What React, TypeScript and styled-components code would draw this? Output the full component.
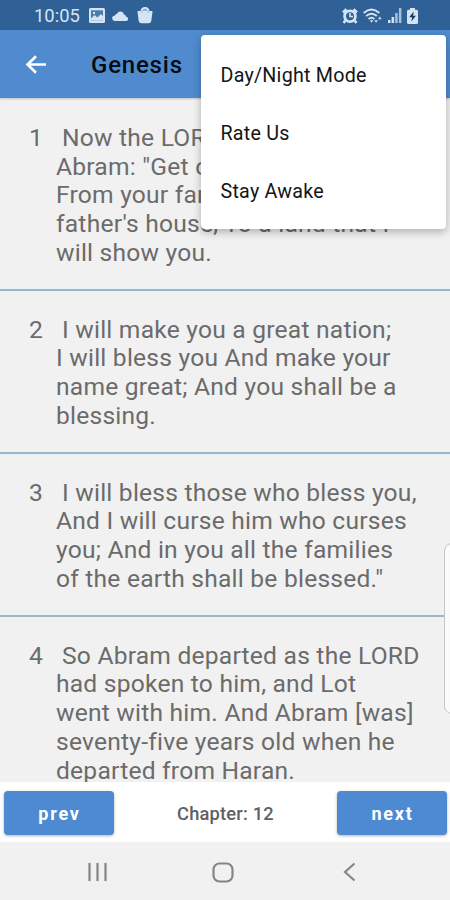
import React from "react";
import styled, { createGlobalStyle } from "styled-components";

const Global = createGlobalStyle`
  * { box-sizing: border-box; }
  body { margin: 0; background: #f1f1f1; font-family: Roboto, sans-serif; }
`;

const Screen = styled.div`
  position: relative;
  width: 450px;
  height: 900px;
  display: flex;
  flex-direction: column;
  overflow: hidden;
  background: #f1f1f1;
`;

const StatusBar = styled.header`
  height: 30px;
  flex: none;
  display: flex;
  align-items: center;
  justify-content: space-between;
  padding: 1px 32px 0 34px;
  background: #306196;
  color: #d3e4f4;
`;

const StatusGroup = styled.div<{ $gap: number }>`
  display: flex;
  align-items: center;
  gap: ${(p) => p.$gap}px;
  svg { display: block; }
`;

const Clock = styled.span`
  width: 47px;
  font-size: 18.4px;
  line-height: 28px;
  white-space: nowrap;
`;

const AppBar = styled.div`
  height: 68px;
  flex: none;
  display: flex;
  align-items: center;
  padding: 1px 0 0 25px;
  background: #508bcf;
  box-shadow: 0 1px 2px rgba(0, 0, 0, 0.2);
  z-index: 1;
`;

const Title = styled.h1`
  margin: 0 0 0 44px;
  font-size: 24px;
  font-weight: 500;
  letter-spacing: 0.8px;
  color: #050b14;
`;

const IconButton = styled.button`
  border: 0;
  padding: 0;
  background: none;
  display: flex;
`;

const Verses = styled.main`
  flex: 1;
  min-height: 0;
  padding-top: 0.8px;
  overflow: hidden;
`;

const Verse = styled.article`
  display: flex;
  padding: 25px 0 20.8px 29px;
  border-bottom: 2px solid #97b9cf;
  font-size: 24.6px;
  letter-spacing: 0.22px;
  line-height: 28.8px;
  color: #6b6b6b;
`;

const VerseNumber = styled.span`
  width: 27px;
  flex: none;
`;

const VerseLine = styled.span<{ $first: boolean }>`
  display: block;
  padding-left: ${(p) => (p.$first ? 6 : 0)}px;
  white-space: nowrap;
`;

const Pager = styled.nav`
  height: 60px;
  flex: none;
  display: flex;
  align-items: center;
  justify-content: space-between;
  padding: 1px 3px 0 4px;
  background: #fff;
`;

const PagerButton = styled.button`
  width: 110px;
  height: 44px;
  border: 0;
  border-radius: 4px;
  padding: 2px 0 0 1px;
  background: #4e8ad1;
  box-shadow: 0 1px 3px rgba(0, 0, 0, 0.3);
  color: #fff;
  font: 700 18px Roboto, sans-serif;
  letter-spacing: 1.75px;
`;

const ChapterLabel = styled.span`
  padding-top: 1px;
  font-size: 18.3px;
  letter-spacing: 0.2px;
  font-weight: 500;
  color: #606060;
`;

const SystemNav = styled.footer`
  height: 58px;
  flex: none;
  display: grid;
  grid-template-columns: 126px 126px 126px;
  justify-content: center;
  justify-items: center;
  align-items: center;
  padding: 2px 4px 0 0;
  svg { display: block; }
`;

const Menu = styled.div`
  position: absolute;
  z-index: 3;
  top: 35px;
  right: 4.5px;
  width: 245px;
  height: 194px;
  padding: 11.7px 0 0 20px;
  border-radius: 4px;
  background: #fff;
  box-shadow: 0 3px 9px rgba(0, 0, 0, 0.28);
`;

const MenuItem = styled.div`
  height: 58.2px;
  line-height: 58.2px;
  font-size: 19.7px;
  letter-spacing: 0.23px;
  color: #151515;
`;

const EdgeHandle = styled.div`
  position: absolute;
  z-index: 2;
  top: 543px;
  left: 444px;
  width: 16px;
  height: 171px;
  border: 1.5px solid #c4c4c4;
  border-radius: 9px;
  background: #fbfbfb;
`;

const verses = [
  ["Now the LORD had said to", "Abram: \"Get out of your country,", "From your family And from your", "father's house, To a land that I", "will show you."],
  ["I will make you a great nation;", "I will bless you And make your", "name great; And you shall be a", "blessing."],
  ["I will bless those who bless you,", "And I will curse him who curses", "you; And in you all the families", "of the earth shall be blessed.\""],
  ["So Abram departed as the LORD", "had spoken to him, and Lot", "went with him. And Abram [was]", "seventy-five years old when he", "departed from Haran."],
];

const PictureIcon = () => (
  <svg width="16" height="15" viewBox="0 0 16 15">
    <rect width="16" height="15" rx="1.5" fill="#d3e4f4" />
    <rect x="2" y="2.3" width="12" height="10" fill="#4d7aa9" />
    <path d="M2 12.3V10.500l3.500-3.500 3 2.500L12 6l2 2.200v4.100z" fill="#d3e4f4" />
    <circle cx="5" cy="5" r="1.2" fill="#d3e4f4" />
  </svg>
);
const CloudIcon = () => (
  <svg width="17" height="12" viewBox="0 0 17 12">
    <path d="M3 11a2.600 2.600 0 0 1-.4-5.200A3 3 0 0 1 5 3.800 3.700 3.700 0 0 1 12 4.500a3 3 0 0 1 2.200 2.300A2.150 2.150 0 0 1 14.500 11z" fill="#d3e4f4" />
  </svg>
);
const BagIcon = () => (
  <svg width="16" height="17" viewBox="0 0 16 17">
    <path d="M4.500 5V4a3.500 3.200 0 0 1 7 0v1" fill="#8fb0cf" stroke="#d3e4f4" strokeWidth="1.8" />
    <path d="M1 4h14a.6.6 0 0 1 .5.700l-1.200 9.300a2.800 2.800 0 0 1-2.700 2.300H4.400a2.800 2.800 0 0 1-2.700-2.300L.5 4.700A.6.6 0 0 1 1 4z" fill="#d3e4f4" />
    <path d="M4.800 4v1.800M11.200 4v1.800" stroke="#8fb0cf" />
  </svg>
);
const AlarmIcon = () => (
  <svg width="16" height="16" viewBox="0 0 16 16" fill="none" stroke="#d3e4f4">
    <path d="M1 4.500 4.500 1.200M15 4.500l-3.500-3.300M3.500 12.500l-2 2.300M12.500 12.500l2 2.300" strokeWidth="2.6" />
    <circle cx="8" cy="8.3" r="5.4" strokeWidth="2.8" />
    <path d="M8 5v3.500h3" strokeWidth="1.6" />
  </svg>
);
const WifiIcon = () => (
  <svg width="19" height="16" viewBox="0 0 19 16" fill="none" stroke="#d3e4f4" strokeWidth="1.9">
    <path d="M.7 5Q8.500-1.800 16.300 5M3.200 8Q8.500 3.500 13.800 8M5.600 11Q8.500 8.300 11.400 11" />
    <path d="m6.800 12.300 1.800 2.400 1.800-2.400z" fill="#d3e4f4" stroke="none" />
    <path d="m11.300 12.200 1.800 2.600 1.800-2.600zM15 11.200l1.800-2.700 1.800 2.700z" fill="#d3e4f4" stroke="none" />
  </svg>
);
const SignalIcon = () => (
  <svg width="14" height="15" viewBox="0 0 14 15" fill="#d3e4f4">
    <path d="M0 12h2.500v3H0zM3.600 9h2.500v6H3.600z" />
    <path d="M7.200 5h2.500v10H7.200zM10.900 0h2.500v15h-2.500z" opacity=".72" />
  </svg>
);
const BatteryIcon = () => (
  <svg width="11" height="16" viewBox="0 0 11 16">
    <path d="M3 0h5v1.700h1.500A1.500 1.500 0 0 1 11 3.200v11.300a1.500 1.500 0 0 1-1.500 1.500h-8A1.500 1.500 0 0 1 0 14.500V3.200a1.500 1.500 0 0 1 1.500-1.500H3z" fill="#d3e4f4" />
    <path d="M6.800 3.500 2.200 9.200h3L4.300 13.500 8.900 7.800H6z" fill="#16365b" />
  </svg>
);

export default function App() {
  return (
    <Screen>
      <Global />
      <StatusBar>
        <StatusGroup $gap={7.5}>
          <Clock>10:05</Clock>
          <PictureIcon />
          <CloudIcon />
          <BagIcon />
        </StatusGroup>
        <StatusGroup $gap={5.3}>
          <AlarmIcon />
          <WifiIcon />
          <SignalIcon />
          <BatteryIcon />
        </StatusGroup>
      </StatusBar>
      <AppBar>
        <IconButton aria-label="Back">
          <svg width="22" height="20" viewBox="0 0 22 20" fill="none" stroke="#fff" strokeWidth="2.6">
            <path d="M21 9.500H3M11 1.200 2.500 9.500l8.500 8.300" />
          </svg>
        </IconButton>
        <Title>Genesis</Title>
      </AppBar>
      <Verses>
        {verses.map((lines, index) => (
          <Verse key={index}>
            <VerseNumber>{index + 1}</VerseNumber>
            <div>
              {lines.map((line, i) => (
                <VerseLine key={line} $first={i === 0}>{line}</VerseLine>
              ))}
            </div>
          </Verse>
        ))}
      </Verses>
      <Pager>
        <PagerButton>prev</PagerButton>
        <ChapterLabel>Chapter: 12</ChapterLabel>
        <PagerButton>next</PagerButton>
      </Pager>
      <SystemNav>
        <svg width="21" height="20" viewBox="0 0 21 20" stroke="#858585" strokeWidth="2.2">
          <path d="M2.500 1v18M10.500 1v18M18.500 1v18" />
        </svg>
        <svg width="22" height="21" viewBox="0 0 22 21" fill="none" stroke="#858585" strokeWidth="2.2">
          <rect x="1.5" y="1.5" width="19" height="18" rx="6" />
        </svg>
        <svg width="13" height="20" viewBox="0 0 13 20" fill="none" stroke="#858585" strokeWidth="2.2">
          <path d="M11.500 1.500 2 10l9.500 8.500" />
        </svg>
      </SystemNav>
      <EdgeHandle />
      <Menu>
        <MenuItem>Day/Night Mode</MenuItem>
        <MenuItem>Rate Us</MenuItem>
        <MenuItem>Stay Awake</MenuItem>
      </Menu>
    </Screen>
  );
}
